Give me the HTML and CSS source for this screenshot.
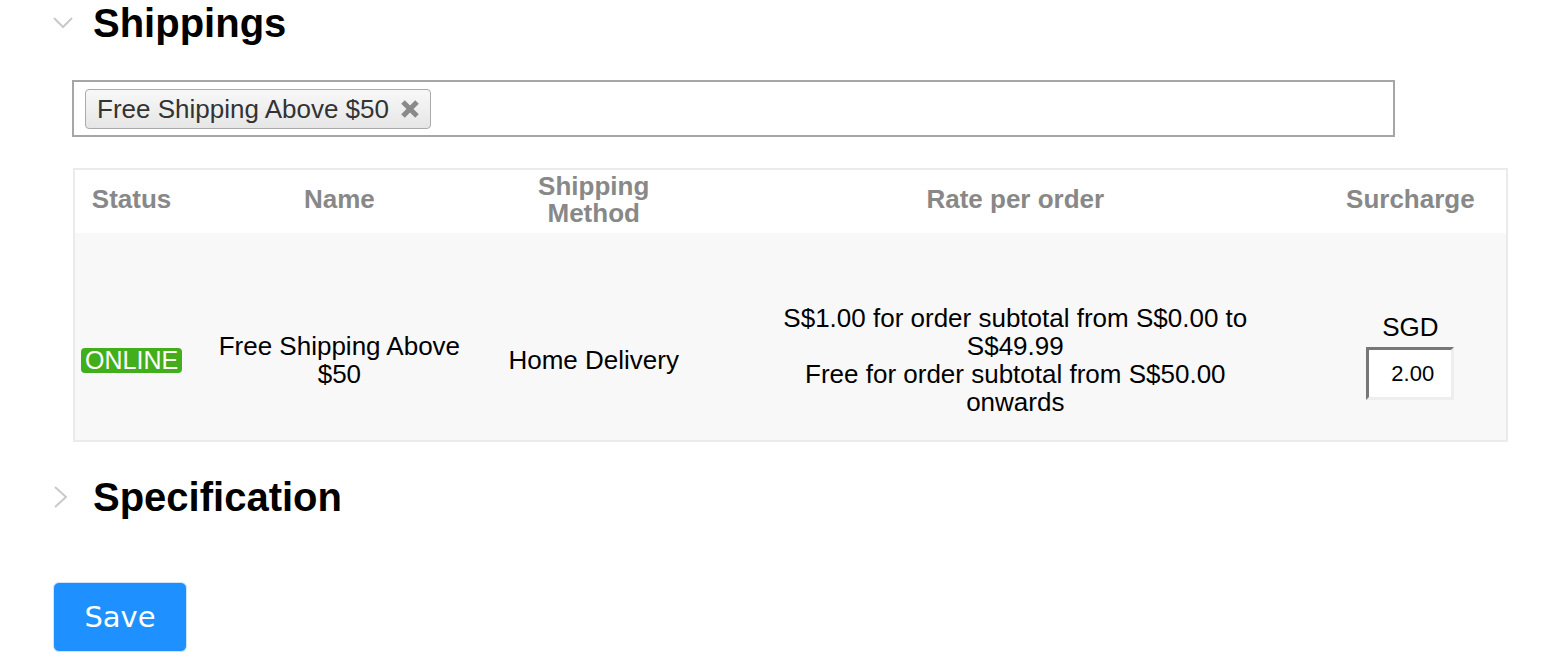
FILE: index.html
```html
<!DOCTYPE html>
<html lang="en">
<head>
    <meta charset="UTF-8">
    <title>Shippings</title>
    <link rel="stylesheet" href="styles.css">
</head>
<body>
    <div class="page">
        <div class="section-head">
            <span class="toggle">
                <svg width="20" height="12" viewBox="0 0 20 12"><polyline points="1,1 10,10 19,1" fill="none" stroke="#c9c9c9" stroke-width="2"/></svg>
            </span>
            <h2>Shippings</h2>
        </div>

        <div class="section-body">
            <div class="tag-box">
                <span class="tag">Free Shipping Above $50
                    <svg class="tag-remove" width="18" height="18" viewBox="0 0 18 18"><path d="M2 2 L16 16 M16 2 L2 16" stroke="#8a8a8a" stroke-width="5"/></svg>
                </span>
            </div>

            <table class="shipping-table">
                <colgroup>
                    <col class="col-status">
                    <col class="col-name">
                    <col class="col-method">
                    <col class="col-rate">
                    <col class="col-surcharge">
                </colgroup>
                <tr>
                    <th>Status</th>
                    <th>Name</th>
                    <th>Shipping<br>Method</th>
                    <th>Rate per order</th>
                    <th class="surcharge">Surcharge</th>
                </tr>
                <tr>
                    <td><span class="badge-online">ONLINE</span></td>
                    <td class="name">Free Shipping Above $50</td>
                    <td>Home Delivery</td>
                    <td class="rate">
                        <div>S$1.00 for order subtotal from S$0.00 to S$49.99</div>
                        <div>Free for order subtotal from S$50.00 onwards</div>
                    </td>
                    <td class="surcharge">
                        <div>SGD</div>
                        <input class="surcharge-input" type="text" value="2.00">
                    </td>
                </tr>
            </table>
        </div>

        <div class="section-head spec">
            <span class="toggle">
                <svg width="14" height="22" viewBox="0 0 14 22"><polyline points="1,1 12,11 1,21" fill="none" stroke="#c9c9c9" stroke-width="2"/></svg>
            </span>
            <h2>Specification</h2>
        </div>

        <button class="btn-save">Save</button>
    </div>
</body>
</html>
```

FILE: styles.css
```css
body {
    margin: 0;
    font-family: 'Liberation Sans', Arial, Helvetica, sans-serif;
    color: #000;
    background-color: #fff;
}
.page {
    padding: 0 0 20px 53px;
}
.section-head {
    display: flex;
    align-items: center;
    height: 46px;
}
.section-head.spec {
    margin-top: 32px;
}
.toggle {
    width: 40px;
    flex-shrink: 0;
    display: flex;
    align-items: center;
}
.section-head.spec .toggle svg {
    margin-left: 1px;
}
h2 {
    margin: 0;
    font-size: 40px;
    line-height: 46px;
    font-weight: bold;
}
.section-body {
    padding-left: 19px;
}
.tag-box {
    margin-top: 34px;
    width: 1323px;
    box-sizing: border-box;
    height: 57px;
    border: 2px solid #a6a6a6;
    padding: 7px 11px 6px;
    display: flex;
}
.tag {
    display: inline-flex;
    align-items: center;
    gap: 12px;
    height: 40px;
    box-sizing: border-box;
    padding: 0 11px;
    border: 1px solid #aaa;
    border-radius: 4px;
    background: linear-gradient(#f8f8f8, #e6e6e6);
    color: #333;
    font-size: 26px;
    line-height: 28px;
}
.tag-remove {
    display: block;
}
.shipping-table {
    margin-top: 31px;
    margin-left: 1px;
    border-collapse: collapse;
    table-layout: fixed;
    width: 1435px;
    border: 2px solid #ebebeb;
}
.col-status { width: 114px; }
.col-name { width: 302px; }
.col-method { width: 206px; }
.col-rate { width: 636px; }
.col-surcharge { width: 173px; }
th {
    height: 64px;
    box-sizing: border-box;
    padding: 2px 0 6px;
    font-size: 26px;
    line-height: 27px;
    font-weight: bold;
    color: #888;
    text-align: center;
    vertical-align: middle;
    background-color: #fff;
}
td {
    padding: 71px 0 24px;
    font-size: 26px;
    line-height: 28px;
    text-align: center;
    vertical-align: middle;
    background-color: #f8f8f8;
}
td.name {
    padding-left: 20px;
    padding-right: 20px;
}
td.rate {
    padding-left: 58px;
    padding-right: 58px;
}
th.surcharge, td.surcharge {
    padding-right: 19px;
}
.badge-online {
    display: inline-block;
    padding: 0 4px;
    border-radius: 4px;
    background-color: #42ae1b;
    color: #fff;
    font-size: 25px;
    line-height: 25px;
}
.surcharge-input {
    display: block;
    margin: 6px auto 7px;
    width: 88px;
    height: 53px;
    box-sizing: border-box;
    padding: 0 0 0 22px;
    border-style: solid;
    border-width: 3px;
    border-color: #777 #eee #eee #777;
    background-color: #fff;
    font-family: 'Liberation Sans', Arial, sans-serif;
    font-size: 22px;
    color: #000;
    outline: none;
}
.btn-save {
    display: block;
    margin-top: 62px;
    width: 134px;
    height: 70px;
    border: 1px solid #cfe3fb;
    border-radius: 6px;
    background-color: #1e90ff;
    color: #fff;
    font-family: 'DejaVu Sans', Verdana, sans-serif;
    font-size: 29px;
    cursor: pointer;
}
```
